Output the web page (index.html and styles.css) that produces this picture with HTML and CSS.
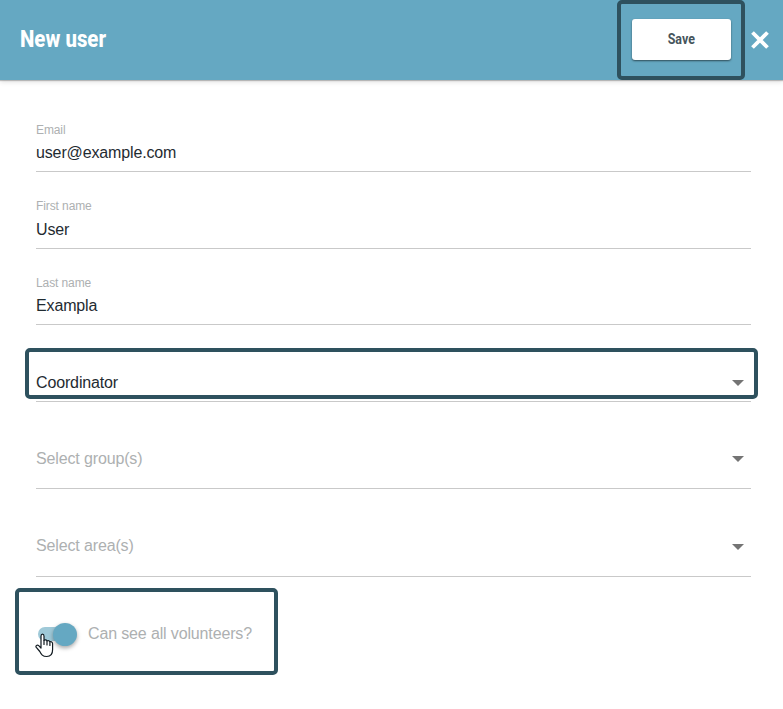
FILE: index.html
```
<!DOCTYPE html>
<html lang="en">
<head>
<meta charset="utf-8">
<title>New user</title>
<link rel="stylesheet" href="styles.css">
</head>
<body>
<header class="toolbar">
  <h1 class="title"><span class="condensed">New user</span></h1>
  <div class="save-frame"><button class="save"><span class="condensed">Save</span></button></div>
  <button class="close" aria-label="Close"><svg width="18" height="18" viewBox="0 0 18 18"><path d="M1.5 1.5 16.5 16.5M16.5 1.5 1.5 16.5" stroke="#fff" stroke-width="3.8"/></svg></button>
</header>
<main class="form">
  <div class="field first"><label>Email</label><span class="value email">user@example.com</span></div>
  <div class="field name"><label>First name</label><span class="value">User</span></div>
  <div class="field last"><label>Last name</label><span class="value">Exampla</span></div>
  <div class="field role"><span class="value">Coordinator</span><i class="arrow"></i><div class="role-frame"></div></div>
  <div class="field groups"><span class="value hint">Select group(s)</span><i class="arrow"></i></div>
  <div class="field areas"><span class="value hint">Select area(s)</span><i class="arrow"></i></div>
  <div class="switch-frame">
    <div class="switch"><div class="thumb"></div>
      <svg class="cursor" width="19" height="25" viewBox="0 0 19 25"><path d="M6 15V3.2C6 .5 9 .5 9 3.2V7.500c.8-1 2.700-.8 3 .6 1-.8 2.600-.4 2.900.9 1.300-.7 2.700 0 2.700 1.700v5.800C17.600 21 15.500 23.500 11.800 23.500 7.500 23.500 6.300 21.500 4.800 18.500L1.300 14.400C.2 12.800 2.200 11.200 3.700 12.600Z" fill="#fff" stroke="#111a20" stroke-width="1.200" stroke-linejoin="round"/><path d="M9 7.500v4M12 8.500v3.500M14.900 9.500v3" stroke="#111a20" stroke-width="1.200" stroke-linecap="round"/></svg>
    </div>
    <span class="switch-label">Can see all volunteers?</span>
  </div>
</main>
</body>
</html>
```
FILE: styles.css
```
* { box-sizing: border-box; }
body { margin: 0; height: 709px; overflow: hidden; background: #fff; font-family: "Liberation Sans", sans-serif; color: #1f2b31; }
.toolbar { position: relative; display: flex; height: 80px; background: #65a8c2; box-shadow: 0 1px 1px rgba(0,0,0,.22), 0 2px 5px rgba(0,0,0,.12); font-family: Roboto, sans-serif; }
.title { margin: 0; padding: 25px 0 0 20px; font-size: 24px; line-height: 28px; color: #fff; font-weight: 800; flex: 1; }
.condensed { display: inline-block; transform: scaleX(.85); transform-origin: left; }
.save-frame { width: 128px; height: 80px; border: 4px solid #2e515e; border-radius: 5px; padding: 15px 10px 0 11px; }
.save { width: 99px; height: 41px; border: 0; border-radius: 3px; background: #fff; color: #46555c; font: 700 14px Roboto, sans-serif; padding: 0 0 2px; box-shadow: 0 1px 2px rgba(0,0,0,.55); }
.save .condensed { transform: scaleX(.89); transform-origin: center; }
.close { width: 18px; height: 18px; margin: 31px 14px 0 6px; padding: 0; border: 0; background: none; }
.close svg { display: block; }
.form { padding: 0 32px 0 36px; }
.field { position: relative; display: flex; flex-direction: column; justify-content: flex-end; height: 77px; padding-bottom: 9px; border-bottom: 1px solid #c9c9c9; }
.first { height: 92px; }
.last { height: 76px; }
.groups { height: 87px; padding-bottom: 20px; }
.areas { height: 88px; padding-bottom: 21px; }
.field label { font-size: 12px; line-height: 14px; margin-bottom: 7px; color: #adb0b1; letter-spacing: -.1px; }
.name label { margin-bottom: 8px; }
.value { font-size: 16px; line-height: 18px; letter-spacing: -.14px; }
.hint, .switch-label { color: #adb0b1; }
.arrow { position: absolute; right: 7px; bottom: 15px; width: 0; height: 0; border: 6px solid transparent; border-top-color: #747474; border-bottom: 0; }
.groups .arrow, .areas .arrow { bottom: 26px; }
.role-frame { position: absolute; left: -11px; top: 23px; width: 733px; height: 51px; border: 4px solid #2e515e; border-radius: 5px; }
.switch-frame { display: flex; align-items: center; width: 263px; height: 87px; margin: 11px 0 0 -21px; border: 4px solid #2e515e; border-radius: 5px; padding: 5px 0 0 19px; }
.switch { position: relative; width: 36px; height: 14px; border-radius: 7px; background: #9fc9d8; }
.thumb { position: absolute; left: 15px; top: -4px; width: 24px; height: 23px; border-radius: 50%; background: #65a8c2; box-shadow: 0 2px 4px rgba(0,0,0,.35); }
.cursor { position: absolute; left: -3px; top: 6px; }
.switch-label { margin-left: 14px; font-size: 16px; line-height: 18px; letter-spacing: -.14px; }
```
